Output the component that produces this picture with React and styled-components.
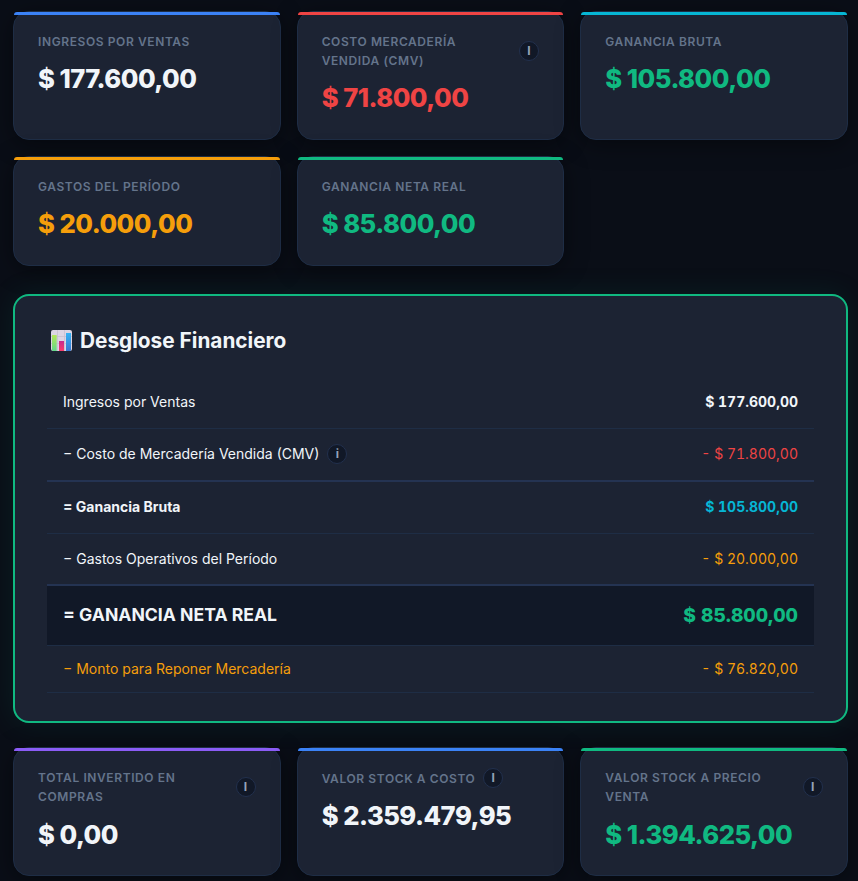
import styled, { createGlobalStyle } from "styled-components";

const GlobalStyle = createGlobalStyle`
  * {
    box-sizing: border-box;
  }

  body {
    margin: 0;
    background: #0a0e17;
    color: #f1f5f9;
    font-family: Inter, "Liberation Sans", sans-serif;
    font-size: 16px;
    line-height: 1.6;
    overflow: hidden;
  }
`;

const Page = styled.main`
  height: 881px;
  padding: 10.7px 10px 0 13px;
  overflow: hidden;
`;

const Grid = styled.section`
  display: grid;
  grid-template-columns: repeat(3, 1fr);
  gap: 16px;
`;

const Card = styled.article`
  padding: 20px 24px;
  border: 1px solid #1e2d45;
  border-radius: 16px;
  background: #1c2333;
  box-shadow: 0 4px 24px rgba(0, 0, 0, 0.4);

  &::before {
    content: "";
    display: block;
    height: 3px;
    margin: -20px -24px 17px;
    border-radius: 16px 16px 0 0;
    background: ${({ $accent }) => $accent};
  }
`;

const Label = styled.div`
  display: flex;
  align-items: center;
  gap: 8px;
  margin-bottom: 8px;
  color: #64748b;
  font-size: 12px;
  font-weight: 600;
  letter-spacing: 0.6px;
  text-transform: uppercase;
`;

const Value = styled.div`
  color: ${({ $color }) => $color || "#f1f5f9"};
  font-size: 25.6px;
  font-weight: 800;
  letter-spacing: -0.512px;
`;

const Info = styled.span`
  display: inline-flex;
  flex-shrink: 0;
  align-items: center;
  justify-content: center;
  width: 20px;
  height: 20px;
  border: 1px solid #22304d;
  border-radius: 50%;
  background: #111827;
  color: #94a3b8;
  font-size: 12px;
  font-weight: 700;
  line-height: 1;
`;

const Panel = styled.section`
  height: 429px;
  margin: 28px 0 24px;
  padding: 28px 32px;
  border: 2px solid #10b981;
  border-radius: 16px;
  background: #1c2333;
  box-shadow: 0 0 30px rgba(16, 185, 129, 0.1);
`;

const Title = styled.h2`
  display: flex;
  align-items: center;
  gap: 8px;
  height: 34px;
  margin: 0 0 18px;
  padding-left: 4px;
  font-size: 20.8px;
  font-weight: 700;

  svg {
    margin-bottom: 2px;
  }
`;

const Row = styled.div`
  display: flex;
  align-items: center;
  justify-content: space-between;
  height: ${({ $height }) => $height}px;
  padding: 0 16px;
  border-bottom: ${({ $thick }) => ($thick ? "2px solid #243352" : "1px solid #1e2d45")};
  background: ${({ $dark }) => ($dark ? "#111827" : "transparent")};
  color: ${({ $color }) => $color || "#f1f5f9"};
  font-size: ${({ $size }) => $size || 14}px;
  font-weight: ${({ $weight }) => $weight || 400};
`;

const Concept = styled.span`
  display: flex;
  align-items: center;
  gap: 8px;
  padding-bottom: ${({ $dark }) => ($dark ? 2 : 0)}px;

  ${Info} {
    margin-bottom: 1px;
  }
`;

const Amount = styled.span`
  color: ${({ $color }) => $color};
  font-size: ${({ $size }) => $size || 14}px;
  font-weight: ${({ $weight }) => $weight || 400};
  font-variant-numeric: tabular-nums;
`;

const ChartIcon = () => (
  <svg width="21" height="21" viewBox="0 0 21 21" aria-hidden="true">
    <defs>
      <linearGradient id="green" x1="0" y1="0" x2="0" y2="1">
        <stop stopColor="#b5e65a" />
        <stop offset="1" stopColor="#61d889" />
      </linearGradient>
      <linearGradient id="pink" x1="0" y1="0" x2="0" y2="1">
        <stop stopColor="#c52b91" />
        <stop offset="1" stopColor="#fa3c68" />
      </linearGradient>
      <linearGradient id="blue" x1="0" y1="0" x2="0" y2="1">
        <stop stopColor="#35b3f4" />
        <stop offset="1" stopColor="#3978d2" />
      </linearGradient>
    </defs>
    <rect width="21" height="21" rx="2" fill="#dcd5e4" />
    <path d="M0 6.5H21M0 13.5H21M6.5 0V21M13.5 0V21" stroke="#c6bfd1" strokeWidth="0.8" />
    <path d="M1 5h4.7v16H2a1 1 0 0 1-1-1z" fill="url(#green)" />
    <path d="M8 11h5v10H8z" fill="url(#pink)" />
    <path d="M15 3h5v17a1 1 0 0 1-1 1h-4z" fill="url(#blue)" />
  </svg>
);

const summary = [
  { label: "Ingresos por Ventas", value: "$ 177.600,00", accent: "#3b82f6" },
  { label: "Costo Mercadería Vendida (CMV)", value: "$ 71.800,00", accent: "#ef4444", color: "#ef4444", info: true },
  { label: "Ganancia Bruta", value: "$ 105.800,00", accent: "#06b6d4", color: "#10b981" },
  { label: "Gastos del Período", value: "$ 20.000,00", accent: "#f59e0b", color: "#f59e0b" },
  { label: "Ganancia Neta Real", value: "$ 85.800,00", accent: "#10b981", color: "#10b981" },
];

const stock = [
  { label: "Total Invertido en Compras", value: "$ 0,00", accent: "#8b5cf6", info: true },
  { label: "Valor Stock a Costo", value: "$ 2.359.479,95", accent: "#3b82f6", info: true },
  { label: "Valor Stock a Precio Venta", value: "$ 1.394.625,00", accent: "#10b981", color: "#10b981", info: true },
];

const rows = [
  { concept: "Ingresos por Ventas", amount: "$ 177.600,00", height: 53, amountWeight: 700 },
  { concept: "− Costo de Mercadería Vendida (CMV)", amount: "- $ 71.800,00", height: 53, amountColor: "#ef4444", info: true, thick: true },
  { concept: "= Ganancia Bruta", amount: "$ 105.800,00", height: 52, weight: 700, amountWeight: 700, amountColor: "#06b6d4" },
  { concept: "− Gastos Operativos del Período", amount: "- $ 20.000,00", height: 52, amountColor: "#f59e0b", thick: true },
  { concept: "= GANANCIA NETA REAL", amount: "$ 85.800,00", height: 60, size: 17.6, weight: 700, amountSize: 19.2, amountWeight: 800, amountColor: "#10b981", dark: true },
  { concept: "− Monto para Reponer Mercadería", amount: "- $ 76.820,00", height: 47, color: "#f59e0b", amountColor: "#f59e0b" },
];

const CardGrid = ({ items }) => (
  <Grid>
    {items.map((item) => (
      <Card key={item.label} $accent={item.accent}>
        <Label>
          <span>{item.label}</span>
          {item.info && <Info>i</Info>}
        </Label>
        <Value $color={item.color}>{item.value}</Value>
      </Card>
    ))}
  </Grid>
);

const App = () => {
  return (
    <>
      <GlobalStyle />
      <Page>
        <CardGrid items={summary} />
        <Panel>
          <Title>
            <ChartIcon />
            Desglose Financiero
          </Title>
          {rows.map((row) => (
            <Row
              key={row.concept}
              $height={row.height}
              $thick={row.thick}
              $dark={row.dark}
              $color={row.color}
              $size={row.size}
              $weight={row.weight}
            >
              <Concept $dark={row.dark}>
                {row.concept}
                {row.info && <Info>i</Info>}
              </Concept>
              <Amount $color={row.amountColor} $size={row.amountSize} $weight={row.amountWeight}>
                {row.amount}
              </Amount>
            </Row>
          ))}
        </Panel>
        <CardGrid items={stock} />
      </Page>
    </>
  );
};

export default App;
